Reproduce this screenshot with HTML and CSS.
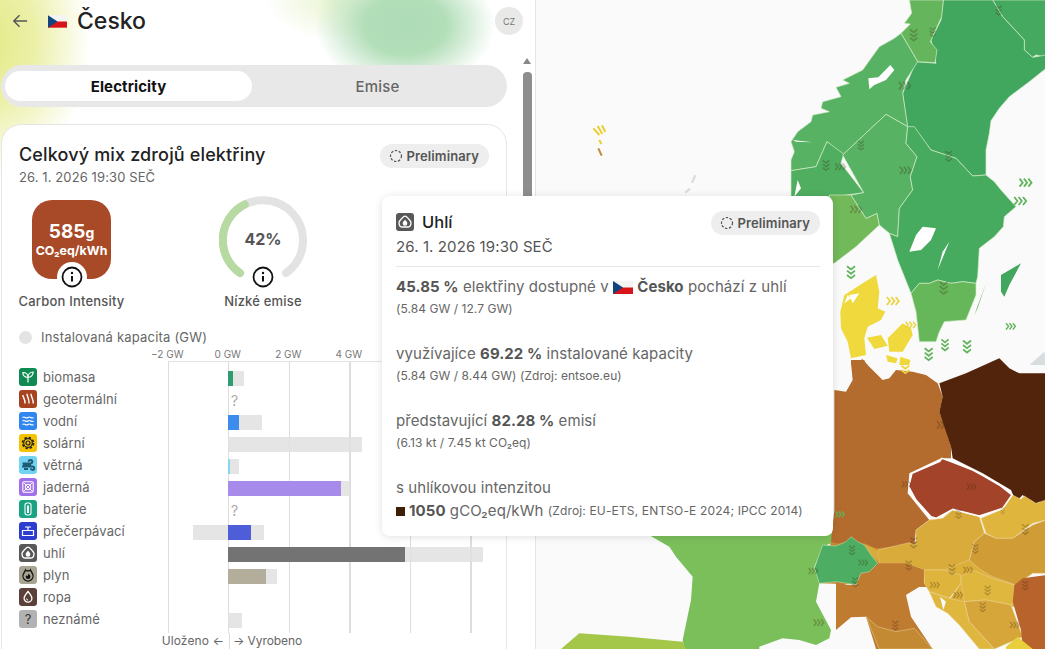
FILE: index.html
```html
<!DOCTYPE html>
<html lang="cs">
<head>
<meta charset="utf-8">
<title>Česko</title>
<link rel="stylesheet" href="styles.css">
</head>
<body>
<svg class="defs" aria-hidden="true">
  <symbol id="flag" viewBox="0 0 20 13"><rect width="20" height="6.500" fill="#f4f4f4"/><rect y="6.500" width="20" height="6.500" fill="#d7141a"/><path d="M0 0l10 6.500L0 13z" fill="#11457e"/></symbol>
  <symbol id="spin" viewBox="0 0 14 14"><circle cx="7" cy="7" r="5.500" fill="none" stroke="#555" stroke-width="1.200" stroke-dasharray="2.400 1.600"/></symbol>
  <symbol id="info" viewBox="0 0 22 22"><circle cx="11" cy="11" r="9.500" fill="#fff" stroke="#111" stroke-width="1.800"/><circle cx="11" cy="7" r="1.200" fill="#111"/><path d="M11 10v5.500" stroke="#111" stroke-width="2"/></symbol>
  <symbol id="i-bio" viewBox="0 0 18 18"><path d="M9 14.500V8.500M9 9.500C9 6.500 7 4.500 3.800 4.500 3.800 7.500 6 9.500 9 9.500zM9 9.500C9 6.500 11 4 14.200 4 14.200 7 12 9.500 9 9.500z" fill="none" stroke="#fff" stroke-width="1.200" stroke-linejoin="round"/></symbol>
  <symbol id="i-geo" viewBox="0 0 18 18"><path d="M3.800 5c.2 2.500 2.700 4.500 2.200 8.500M8 3.800c0 3 2.500 5 2 9.700M12 3.800c0 3 2.600 5.200 2.200 9.700" fill="none" stroke="#fff" stroke-width="1.400"/></symbol>
  <symbol id="i-hydro" viewBox="0 0 18 18"><path d="M3.500 5.500q1.400-1 2.800 0t2.700 0 2.800 0 2.700 0M3.500 9q1.400-1 2.800 0t2.700 0 2.800 0 2.700 0M3.500 12.500q1.400-1 2.800 0t2.700 0 2.800 0 2.700 0" fill="none" stroke="#fff" stroke-width="1.200"/></symbol>
  <symbol id="i-solar" viewBox="0 0 18 18"><circle cx="9" cy="9" r="2" fill="none" stroke="#222" stroke-width="1.200"/><circle cx="9" cy="9" r="4.300" fill="none" stroke="#222" stroke-width="1.200"/><circle cx="9" cy="9" r="5.500" fill="none" stroke="#222" stroke-width="1.600" stroke-dasharray="2.400 1.920"/></symbol>
  <symbol id="i-wind" viewBox="0 0 18 18"><path d="M3.500 7.500h8a1.800 1.800 0 1 0-1.800-1.800M3 10.500h10.500a1.700 1.700 0 1 1-1.700 1.700M4 9l8 0M5 13h4" fill="none" stroke="#1d5c74" stroke-width="2"/></symbol>
  <symbol id="i-nuke" viewBox="0 0 18 18"><rect x="3.800" y="3.800" width="10.400" height="10.400" rx="1.500" fill="none" stroke="#fff" stroke-width="1.100"/><path d="M4.500 4.500l9 9M13.500 4.500l-9 9" stroke="#fff" stroke-width="1"/><circle cx="9" cy="9" r="2.800" fill="none" stroke="#fff" stroke-width="1"/></symbol>
  <symbol id="i-batt" viewBox="0 0 18 18"><rect x="6" y="3" width="6" height="12" rx="2.200" fill="none" stroke="#fff" stroke-width="1.100"/><rect x="8" y="5.500" width="2" height="7.500" fill="#fff"/></symbol>
  <symbol id="i-pump" viewBox="0 0 18 18"><path d="M3.500 8.500h11v5h-11zM9 8.500V5M6 5h6" fill="none" stroke="#fff" stroke-width="1.200"/></symbol>
  <symbol id="i-coal" viewBox="0 0 18 18"><path d="M9 3.200c1.500 0 2.500 1.500 3.500 2.500s2.500 2.500 2.500 4c0 2.500-1.500 4.300-3.500 4.300h-5C4.500 14 3 12.200 3 9.700c0-1.500 1.500-3 2.500-4S7.500 3.200 9 3.200z" fill="none" stroke="#fff" stroke-width="1.300"/><path d="M9 6.800c1.500 1.600 2.300 2.600 2.300 3.600a2.300 2.300 0 0 1-4.600 0c0-1 .8-2 2.300-3.600z" fill="#fff"/></symbol>
  <symbol id="i-gas" viewBox="0 0 18 18"><path d="M6.500 4c.5 1 1.500 1.200 2.500.5 1 .7 2 .5 2.500-.5.300 1.200 1 1.600 1.500 3a5 5 0 1 1-8 0c.5-1.400 1.200-1.800 1.500-3z" fill="none" stroke="#111" stroke-width="1.300"/><path d="M9.500 7.500c1.400 1.400 2 2.200 2 3.200a2.400 2.400 0 0 1-4.800 0c0-.5.200-1 .6-1.400.5.600 1 .8 1.500.5.400-.6.500-1.400.7-2.300z" fill="#111"/></symbol>
  <symbol id="i-oil" viewBox="0 0 18 18"><path d="M9 3.500c2.600 3.100 3.900 4.900 3.900 6.700a3.900 3.900 0 0 1-7.800 0C5.100 8.400 6.400 6.600 9 3.500z" fill="none" stroke="#fff" stroke-width="1.300"/><path d="M7.500 10.500a1.500 1.500 0 0 0 1.500 1.500" fill="none" stroke="#fff" stroke-width="1"/></symbol>
  <symbol id="chev" viewBox="0 0 40 30"><path d="M3 5l8 10-8 10M14 5l8 10-8 10M25 5l8 10-8 10" fill="none" stroke="currentColor" stroke-width="4.500"/></symbol>
  <symbol id="chevd" viewBox="0 0 30 40"><path d="M5 3l10 8 10-8M5 14l10 8 10-8M5 25l10 8 10-8" fill="none" stroke="currentColor" stroke-width="4.500"/></symbol>
</svg>

<aside class="panel">
  <div class="content">
    <header class="head">
      <svg class="back" viewBox="0 0 18 18"><path d="M17 9H2M8.500 2.500L2 9l6.500 6.500" fill="none" stroke="#555" stroke-width="1.600"/></svg>
      <svg class="flag-big"><use href="#flag"/></svg>
      <h1 class="country">Česko</h1>
      <span class="code">CZ</span>
    </header>

    <div class="tabs">
      <div class="tab tab-on">Electricity</div>
      <div class="tab">Emise</div>
    </div>

    <section class="card">
      <div class="card-head">
        <div>
          <h2 class="card-title">Celkový mix zdrojů elektřiny</h2>
          <p class="card-date">26. 1. 2026 19:30 SEČ</p>
        </div>
        <span class="chip"><svg class="spin"><use href="#spin"/></svg>Preliminary</span>
      </div>

      <div class="stats">
        <div class="stat">
          <div class="visual">
            <div class="tile">
              <div class="tile-big">585<small>g</small></div>
              <div class="tile-unit">CO₂eq/kWh</div>
            </div>
            <span class="notch"><svg class="info"><use href="#info"/></svg></span>
          </div>
          <div class="stat-label">Carbon Intensity</div>
        </div>
        <div class="stat">
          <div class="visual">
            <svg class="gauge" viewBox="0 0 88 88">
              <path d="M21 77A40 40 0 1 1 67 77" fill="none" stroke="#e3e3e3" stroke-width="8" stroke-linecap="round"/>
              <path d="M21 77A40 40 0 0 1 25.700 8.400" fill="none" stroke="#b7d9a2" stroke-width="8" stroke-linecap="round"/>
            </svg>
            <span class="gauge-value">42%</span>
            <span class="notch notch-plain"><svg class="info"><use href="#info"/></svg></span>
          </div>
          <div class="stat-label">Nízké emise</div>
        </div>
      </div>

      <div class="legend"><i class="dot"></i>Instalovaná kapacita (GW)</div>
      <div class="axis"><span>−2 GW</span><span>0 GW</span><span>2 GW</span><span>4 GW</span></div>

      <div class="chart">
        <ul class="names">
          <li><span class="ic bg-bio"><svg><use href="#i-bio"/></svg></span>biomasa</li>
          <li><span class="ic bg-geo"><svg><use href="#i-geo"/></svg></span>geotermální</li>
          <li><span class="ic bg-hydro"><svg><use href="#i-hydro"/></svg></span>vodní</li>
          <li><span class="ic bg-solar"><svg><use href="#i-solar"/></svg></span>solární</li>
          <li><span class="ic bg-wind"><svg><use href="#i-wind"/></svg></span>větrná</li>
          <li><span class="ic bg-nuke"><svg><use href="#i-nuke"/></svg></span>jaderná</li>
          <li><span class="ic bg-batt"><svg><use href="#i-batt"/></svg></span>baterie</li>
          <li><span class="ic bg-pump"><svg><use href="#i-pump"/></svg></span>přečerpávací</li>
          <li><span class="ic bg-coal"><svg><use href="#i-coal"/></svg></span>uhlí</li>
          <li><span class="ic bg-gas"><svg><use href="#i-gas"/></svg></span>plyn</li>
          <li><span class="ic bg-oil"><svg><use href="#i-oil"/></svg></span>ropa</li>
          <li><span class="ic bg-unk">?</span>neznámé</li>
        </ul>
        <div class="plot">
          <div class="row"><div class="cap" style="margin-left:60px;width:16px"><div class="gen c-bio" style="width:5px"></div></div></div>
          <div class="row"><span class="q">?</span></div>
          <div class="row"><div class="cap" style="margin-left:60px;width:34px"><div class="gen c-hydro" style="width:11px"></div></div></div>
          <div class="row"><div class="cap" style="margin-left:60px;width:134px"></div></div>
          <div class="row"><div class="cap" style="margin-left:60px;width:11px"><div class="gen c-wind" style="width:2px"></div></div></div>
          <div class="row"><div class="cap" style="margin-left:60px;width:122px"><div class="gen c-nuke" style="width:113px"></div></div></div>
          <div class="row"><span class="q">?</span></div>
          <div class="row"><div class="cap" style="margin-left:25px;width:71px"><div class="gen c-pump" style="margin-left:35px;width:23px"></div></div></div>
          <div class="row"><div class="cap" style="margin-left:60px;width:255px"><div class="gen c-coal" style="width:177px"></div></div></div>
          <div class="row"><div class="cap" style="margin-left:60px;width:49px"><div class="gen c-gas" style="width:38px"></div></div></div>
          <div class="row"></div>
          <div class="row"><div class="cap" style="margin-left:60px;width:14px"></div></div>
        </div>
      </div>

      <div class="foot">
        <span class="foot-l">Uloženo ←</span>
        <span class="foot-r">→ Vyrobeno</span>
      </div>
    </section>
  </div>
  <div class="scroll"><i class="scroll-up"></i><i class="scroll-thumb"></i></div>
</aside>

<main class="map">
  <svg class="map-svg" viewBox="0 0 1530 1947" preserveAspectRatio="none">
    <g stroke="#d4ecc9" stroke-width="2" stroke-linejoin="round">
      <path fill="#46a960" d="M1370 0H1530V172L1500 165 1490 172 1465 150V120L1400 50z"/>
      <path fill="#42a75e" d="M1222 0H1370L1400 50 1465 120V150L1490 172 1530 165V205L1480 245 1460 260 1420 290 1390 325 1365 362 1360 400 1350 450V525L1310 528 1260 475 1185 450 1135 385H1115L1100 280 1140 185 1200 190 1185 120 1215 60z"/>
      <path fill="#65b55c" d="M1120 0H1222L1217 50 1183 125 1203 150 1197 188 1145 185 1095 100 1123 72 1105 70 1127 40z"/>
      <path fill="#57b263" d="M1095 100L1145 185 1110 240 1100 280 1115 380 1050 343 920 465 873 425 840 500 765 512V480L775 455 765 425 785 395 825 365 830 345 880 335 855 325 860 305 915 290 900 262 940 250 920 240 980 210 1005 175 1030 140 1075 115z"/>
      <path fill="#4fae5f" d="M765 512L840 500 873 425 923 462 915 490 983 578 895 590 800 590 765 600z"/>
      <path fill="#72b95a" d="M880 585H945L990 655 1023 640 1030 675 960 740 895 790H880z"/>
      <path fill="#57b263" d="M920 465L1050 343 1115 380 1110 430 1143 470 1123 530 1130 570 1090 625 1085 710 1060 700 1030 675 1023 640 990 655 945 585 983 578z"/>
      <path fill="#47ab5f" d="M1115 380H1135L1185 450 1260 475 1310 528 1350 525 1375 545 1395 570 1440 620 1405 650 1402 680 1375 710 1330 745 1325 830 1320 850 1280 845 1245 850 1205 840 1180 850 1150 850 1125 880 1085 780 1060 700 1085 710 1090 625 1130 570 1123 530 1143 470 1110 430z"/>
      <path fill="#65b75a" d="M1125 880L1150 850 1180 850 1205 840 1245 850 1280 845 1320 850 1320 885 1290 960 1225 965 1210 995 1200 1025 1150 1025 1140 935z"/>
    </g>
    <path fill="#fff" d="M1063 195L1075 210 1050 240 1015 255 1000 268 997 235 1027 232z"/>
    <path fill="#fff" d="M1160 680L1200 685 1185 720 1155 750 1120 755 1140 705zM1240 725L1205 810 1220 755z"/>
    <path fill="#fff" d="M770 420L830 427 780 425zM785 540L795 565 775 590z"/>
    <path fill="#42a75e" d="M1395 825L1455 790 1420 855 1405 890 1395 875z"/>
    <path fill="#65b75a" d="M1315 945L1350 850 1325 925z"/>
    <path d="M172 385l18 20M185 378l14 24M198 376l10 20M190 420l6 12" fill="none" stroke="#e9ce2c" stroke-width="6"/>
    <path d="M187 445l10 22" fill="none" stroke="#c08a3a" stroke-width="6"/>
    <path d="M448 578l14-12M468 548l10-22" fill="none" stroke="#dcdcdc" stroke-width="7"/>
    <g transform="translate(885,585)" fill="#efd93c">
      <path d="M135 240L145 290 140 340 163 350 150 375 110 395 100 430 105 480 60 490 50 440 30 400 28 350 40 300 95 265z"/>
      <path d="M108 428L150 420 170 452 130 462z"/>
      <path d="M170 430L215 385 240 400 245 420 215 470 175 470z"/>
      <path d="M165 480L200 490 195 505 170 500zM208 485L238 495 235 510 205 510z"/>
      <path d="M60 495L100 495 105 510 60 510z" fill="#b46c2e"/>
      <path fill="#fff" d="M55 300L85 295 65 325zM60 310L40 325 50 300z"/>
      <path fill="#d8dde0" d="M595 510L640 470 645 510z"/>
    </g>
    <path fill="#7bbf5b" d="M330 1600H895L885 1630 860 1640 835 1700 850 1750 840 1805 885 1890 880 1915 840 1935 790 1920 740 1915 670 1940V1947H445L440 1920 465 1800 470 1730 420 1670 400 1640z"/>
    <path fill="#a4c74a" d="M75 1947L130 1900 280 1910 440 1925 450 1947z"/>
    <path fill="#c38a33" d="M885 1625H1300V1710H1170L1160 1760 850 1750z"/>
    <path fill="#b46c2e" d="M945 1090L980 1078 1000 1100 1040 1140 1060 1135 1080 1110 1130 1115 1170 1125 1205 1150 1220 1190 1210 1235 1230 1290 1245 1340V1375L1215 1375 1120 1420 1115 1480 1180 1560 1140 1590 1135 1635 1020 1645 985 1630 900 1630 885 1625 895 1530V1170L930 1175 950 1140z"/>
    <path fill="#52240b" d="M1210 1150L1290 1120 1390 1075 1420 1105 1450 1120H1530V1515L1510 1505 1495 1515 1480 1500 1460 1485 1440 1505 1425 1470 1340 1420 1250 1375 1245 1340 1225 1280 1210 1235 1220 1190z"/>
    <g transform="translate(900,1410)" stroke="#ecd49a" stroke-width="1.500" stroke-linejoin="round">
      <path fill="#dcae3a" stroke="none" d="M265 295L400 265 470 315 540 340 535 410 385 400 340 390 375 340z"/>
      <path fill="#d9ab3a" d="M280 150L320 145 350 120 430 140 445 190 415 215 400 270 325 300H265L210 280H130L125 240 220 218 240 225 240 180z"/>
      <path fill="#d9ab3a" stroke="none" d="M85 222L125 240 130 280 105 255z"/>
      <path fill="#dfb53d" d="M435 145L500 118 530 75 555 88 565 78 600 100 630 90V150L590 160 530 205H480L450 190z"/>
      <path fill="#d09c36" d="M445 190L480 205H530L590 165 630 150V310L590 310 540 345 470 320 435 300 400 270 415 215z"/>
      <path fill="#bf7b30" stroke="none" d="M0 335L35 345H60L75 310 100 290 125 280H210L265 300V340L278 352 250 350 210 375 225 440 290 537H120L90 440 45 442 0 480z"/>
      <path fill="#c38a33" d="M90 440L125 470 180 485 235 475 290 537H130z"/>
      <path fill="#dfb43c" d="M265 300H325L375 315 375 340 340 385 280 365 265 340z"/>
      <path fill="#e0b73e" d="M375 320L410 300 470 325 535 345 530 405 450 390 385 395 375 340z"/>
      <path fill="#e0b73e" d="M280 365L340 385 385 395 400 455 475 537H430L370 465 335 430 300 410z"/>
      <path fill="#d6a63a" d="M385 395L450 390 525 405 560 500 475 537 400 455z"/>
      <path fill="#b9632c" stroke="none" d="M535 345L560 325 630 315V537H560L555 480 530 395z"/>
      <path fill="#e9cf3c" stroke="none" d="M510 530L545 500 590 537H510z"/>
      <path fill="#fafafa" stroke="none" d="M312 380L330 395 322 420zM280 375L300 410 285 395z"/>
      <path fill="#4dad62" stroke="#c8e8c0" stroke-width="1.500" d="M-40 225L0 228 30 215 45 200 65 215 85 225 105 255 125 280 100 305 75 310 60 345 35 340 0 335-50 340-65 295z"/>
      <path fill="#a2432a" stroke="#fff" stroke-width="4.500" d="M228 10L310 -25 318 -35 345 -25 410 0 438 15 490 45 528 75 500 115 430 138 350 118 300 145 285 140 240 90 218 50z"/>
    </g>
    <g class="ch-dark">
      <use href="#chev" x="1085" y="240" width="46" height="34"/>
      <use href="#chevd" x="1115" y="85" width="36" height="45"/>
      <use href="#chevd" x="1170" y="80" width="40" height="36"/>
      <use href="#chevd" x="1370" y="15" width="36" height="36"/>
      <use href="#chevd" x="955" y="420" width="40" height="36"/>
      <use href="#chevd" x="850" y="478" width="40" height="40"/>
      <use href="#chev" x="895" y="485" width="40" height="30"/>
      <use href="#chev" x="1085" y="495" width="50" height="32"/>
      <use href="#chevd" x="1220" y="450" width="36" height="40"/>
      <use href="#chevd" x="1205" y="840" width="36" height="52"/>
      <use href="#chev" x="940" y="610" width="44" height="36"/>
      <use href="#chev" x="1200" y="1255" width="44" height="40"/>
      <use href="#chev" x="1095" y="1440" width="36" height="26"/>
      <use href="#chev" x="1290" y="1445" width="36" height="30"/>
      <use href="#chevd" x="1250" y="1525" width="36" height="36"/>
      <use href="#chevd" x="1385" y="1520" width="30" height="26"/>
      <use href="#chevd" x="1115" y="1610" width="36" height="40"/>
      <use href="#chevd" x="1450" y="1570" width="36" height="40"/>
      <use href="#chevd" x="1300" y="1630" width="36" height="36"/>
      <use href="#chevd" x="1100" y="1680" width="36" height="36"/>
      <use href="#chevd" x="1230" y="1690" width="36" height="40"/>
      <use href="#chev" x="1280" y="1695" width="36" height="30"/>
      <use href="#chev" x="1180" y="1740" width="36" height="30"/>
      <use href="#chev" x="1250" y="1770" width="36" height="30"/>
      <use href="#chevd" x="1340" y="1755" width="30" height="36"/>
      <use href="#chevd" x="1325" y="1805" width="30" height="36"/>
      <use href="#chev" x="1420" y="1860" width="36" height="30"/>
      <use href="#chevd" x="1060" y="1860" width="36" height="36"/>
      <use href="#chev" x="830" y="1850" width="40" height="36"/>
      <use href="#chev" x="815" y="1695" width="36" height="36"/>
      <use href="#chevd" x="930" y="1635" width="36" height="36"/>
      <use href="#chev" x="965" y="1670" width="36" height="36"/>
      <use href="#chevd" x="940" y="1730" width="36" height="36"/>
      <use href="#chevd" x="1450" y="1740" width="36" height="36"/>
    </g>
    <g class="ch-green">
      <use href="#chev" x="1445" y="530" width="52" height="36"/>
      <use href="#chev" x="1430" y="585" width="50" height="36"/>
      <use href="#chevd" x="925" y="795" width="40" height="48"/>
      <use href="#chev" x="1400" y="965" width="52" height="28"/>
      <use href="#chevd" x="1160" y="1035" width="36" height="60"/>
      <use href="#chevd" x="1205" y="1015" width="44" height="44"/>
      <use href="#chevd" x="1275" y="1015" width="36" height="54"/>
      <use href="#chev" x="895" y="1525" width="36" height="36"/>
    </g>
    <g class="ch-yellow">
      <use href="#chev" x="1045" y="885" width="56" height="36"/>
      <use href="#chev" x="1100" y="960" width="52" height="30"/>
      <use href="#chevd" x="1090" y="1080" width="36" height="48"/>
    </g>
  </svg>
</main>

<div class="tip">
  <div class="tip-head">
    <div>
      <div class="tip-title"><span class="ic bg-coal"><svg><use href="#i-coal"/></svg></span>Uhlí</div>
      <p class="tip-date">26. 1. 2026 19:30 SEČ</p>
    </div>
    <span class="chip"><svg class="spin"><use href="#spin"/></svg>Preliminary</span>
  </div>
  <div class="tip-body">
    <div class="tip-block">
      <p class="tip-line"><b>45.85 %</b> elektřiny dostupné v <svg class="flag-small"><use href="#flag"/></svg> <b>Česko</b> pochází z uhlí</p>
      <p class="tip-sub">(5.84 GW / 12.7 GW)</p>
    </div>
    <div class="tip-block">
      <p class="tip-line">využívajíce <b>69.22 %</b> instalované kapacity</p>
      <p class="tip-sub">(5.84 GW / 8.44 GW) (Zdroj: entsoe.eu)</p>
    </div>
    <div class="tip-block">
      <p class="tip-line">představující <b>82.28 %</b> emisí</p>
      <p class="tip-sub">(6.13 kt / 7.45 kt CO₂eq)</p>
    </div>
    <div class="tip-block">
      <p class="tip-line">s uhlíkovou intenzitou</p>
      <p class="tip-last"><i class="swatch"></i><b>1050</b> gCO₂eq/kWh <span class="tip-source">(Zdroj: EU-ETS, ENTSO-E 2024; IPCC 2014)</span></p>
    </div>
  </div>
</div>
</body>
</html>
```
FILE: styles.css
```css
* { box-sizing: border-box; }
html, body { margin: 0; height: 100%; }
body {
  width: 1045px;
  height: 649px;
  overflow: hidden;
  display: flex;
  font-family: Inter, "Liberation Sans", sans-serif;
  color: #555;
  background: #fafafa;
  position: relative;
}
h1, h2, p, ul { margin: 0; padding: 0; list-style: none; }
.defs { width: 0; height: 0; position: absolute; }

.panel {
  flex: 0 0 536px;
  height: 649px;
  overflow: hidden;
  display: flex;
  padding-left: 1px;
  border-right: 1px solid #e6e6e6;
  background:
    radial-gradient(ellipse 90px 65px at 405px 25px, #aedcb6 0%, #b2deb8 45%, rgba(190,228,195,0) 100%),
    radial-gradient(ellipse 70px 40px at 335px 0, rgba(225,240,190,.7), rgba(255,255,255,0) 100%),
    radial-gradient(ellipse 100px 140px at -10px 40px, #e4ea88 0%, #ecf0a8 45%, rgba(255,255,255,0) 100%),
    #fff;
}
.content { width: 506px; flex: none; }

.head { height: 42px; display: flex; align-items: center; padding-left: 11px; }
.back { width: 16px; height: 16px; flex: none; }
.flag-big { width: 19px; height: 13px; margin-left: 20px; flex: none; }
.country { font-size: 23px; line-height: 30px; font-weight: 500; color: #222; margin-left: 10px; }
.code {
  margin-left: auto;
  margin-right: -16px;
  width: 28px; height: 28px;
  border-radius: 50%;
  background: #e9eae8;
  color: #777;
  font-size: 9px;
  display: flex; align-items: center; justify-content: center;
}

.tabs {
  margin-top: 23px;
  height: 42px;
  border-radius: 21px;
  background: #e8e8e8;
  padding: 6px 4px;
  display: flex;
}
.tab {
  flex: 1;
  border-radius: 15px;
  display: flex; align-items: center; justify-content: center;
  font-size: 15px; font-weight: 500; color: #666; letter-spacing: .2px;
}
.tab-on { flex: 0 0 247px; background: #fff; color: #111; font-weight: 700; letter-spacing: .1px; }

.card {
  margin-top: 17px;
  height: 560px;
  background: #fff;
  border: 1px solid #e6e6e6;
  border-radius: 20px;
  padding: 19px 0 0 17px;
}
.card-head { display: flex; justify-content: space-between; align-items: flex-start; padding-right: 17px; }
.card-title { font-size: 18px; line-height: 22px; font-weight: 500; color: #222; letter-spacing: .15px; }
.card-date { margin-top: 3px; font-size: 13px; line-height: 16px; color: #666; letter-spacing: .1px; }

.chip {
  display: inline-flex; align-items: center; gap: 4px;
  height: 24px;
  padding: 0 10px 0 9px;
  border-radius: 12px;
  background: #eee;
  font-size: 13px; font-weight: 600; color: #555;
  letter-spacing: .1px;
  flex: none;
}
.spin { width: 14px; height: 14px; }

.stats { display: flex; gap: 86.500px; margin-top: 11px; }
.stat { width: 105px; display: flex; flex-direction: column; align-items: center; }
.visual { position: relative; width: 88px; height: 88px; display: flex; align-items: center; justify-content: center; }
.tile {
  width: 79px; height: 79px;
  margin-top: -1px;
  border-radius: 20px;
  background: #a84a27;
  color: #fff;
  text-align: center;
  font-weight: 700;
  padding-top: 22px;
}
.tile-big { font-size: 19px; line-height: 20px; }
.tile-big small { font-size: 14px; }
.tile-unit { font-size: 12.400px; line-height: 15px; white-space: nowrap; }
.notch {
  position: absolute; left: 29px; top: 66px;
  width: 30px; height: 30px;
  border-radius: 50%;
  background: #fff;
  display: flex; align-items: center; justify-content: center;
}
.notch-plain { background: transparent; }
.info { width: 22px; height: 22px; }
.gauge { width: 88px; height: 88px; position: absolute; left: 0; top: 0; }
.gauge-value { font-size: 16px; font-weight: 700; color: #555; position: relative; top: -1px; }
.stat-label { margin-top: 9px; font-size: 13px; line-height: 16px; font-weight: 500; color: #555; white-space: nowrap; letter-spacing: .2px; }

.legend { margin-top: 20px; display: flex; align-items: center; font-size: 13px; line-height: 16px; color: #666; letter-spacing: .2px; }
.dot { width: 13px; height: 13px; border-radius: 50%; background: #e3e3e3; margin-right: 9px; }

.axis { margin: 3px 0 0 118px; display: flex; font-size: 10px; line-height: 12px; color: #777; }
.axis span { width: 60.500px; text-align: center; }

.chart { display: flex; height: 272px; margin-top: 1px; }
.names { width: 149px; flex: none; padding-top: 5px; }
.names li { height: 22px; display: flex; align-items: center; gap: 6px; font-size: 13px; color: #666; letter-spacing: .1px; }
.ic { width: 18px; height: 18px; border-radius: 3px; display: inline-flex; align-items: center; justify-content: center; flex: none; font-size: 13px; color: #333; }
.ic svg { width: 18px; height: 18px; display: block; }
.bg-bio { background: #0e8a52; }
.bg-geo { background: #a8431f; }
.bg-hydro { background: #2f86ee; }
.bg-solar { background: #f5c400; }
.bg-wind { background: #72d3f3; }
.bg-nuke { background: #a070ea; }
.bg-batt { background: #1aa383; }
.bg-pump { background: #2c3ccf; }
.bg-coal { background: #585858; }
.bg-gas { background: #aaa593; }
.bg-oil { background: #5a4038; }
.bg-unk { background: #b2b2b2; }

.plot {
  flex: 1;
  padding-top: 5px;
  border-top: 1px solid #e3e3e3;
  background: repeating-linear-gradient(to right, #ddd 0, #ddd 1px, transparent 1px, transparent 60.500px);
}
.row { height: 22px; display: flex; align-items: center; }
.cap { height: 15px; background: rgba(225,225,225,.85); display: flex; }
.gen { height: 15px; }
.q { margin-left: 63px; font-size: 14px; color: #aaa; }
.c-bio { background: #2e9c6f; }
.c-hydro { background: #3b8ced; }
.c-wind { background: #86d8ee; }
.c-nuke { background: #a78bea; }
.c-pump { background: #4e5ed8; }
.c-coal { background: #737373; }
.c-gas { background: #b3ad9b; }

.foot { display: flex; margin-left: 140px; font-size: 12px; line-height: 16px; color: #666; height: 20px; }
.foot-l { width: 70px; text-align: right; padding-right: 5px; white-space: nowrap; letter-spacing: .1px; }
.foot-r { border-left: 1px solid #ddd; padding-left: 3px; height: 20px; letter-spacing: -.1px; }

.scroll { margin: 58px 0 0 16px; width: 9px; flex: none; display: flex; flex-direction: column; }
.scroll-up { width: 0; height: 0; border: 4.500px solid transparent; border-top: 0; border-bottom: 6px solid #888; }
.scroll-thumb { margin-top: 8px; height: 330px; background: #8e8e8e; border-radius: 4px; }

.map { flex: 1; height: 649px; overflow: hidden; background: #fafafa; }
.map-svg { width: 510px; height: 649px; display: block; }
.ch-dark { color: rgba(60,40,10,.28); }
.ch-green { color: #62b45c; }
.ch-yellow { color: #ecd340; }

.tip {
  position: absolute;
  left: 382px; top: 196px;
  width: 451px; height: 340px;
  background: #fff;
  border-radius: 8px;
  box-shadow: 0 1px 8px rgba(0,0,0,.12);
  padding: 15px 13px 0 14px;
}
.tip-head { display: flex; justify-content: space-between; align-items: flex-start; height: 56px; border-bottom: 1px solid #e6e6e6; }
.tip-title { display: flex; align-items: center; gap: 8px; font-size: 16.500px; line-height: 22px; font-weight: 500; color: #222; }
.tip-date { margin-top: 5px; font-size: 15px; line-height: 18px; color: #555; letter-spacing: .1px; }
.tip-block { height: 67px; }
.tip-body { padding-top: 9px; }
.tip-line { font-size: 15px; line-height: 22px; color: #666; letter-spacing: .07px; white-space: nowrap; }
.tip-line b, .tip-last b { font-weight: 700; color: #555; }
.tip-sub { font-size: 12px; line-height: 22px; color: #666; white-space: nowrap; letter-spacing: .05px; }
.tip-last { font-size: 15px; line-height: 24px; color: #666; letter-spacing: .07px; display: flex; align-items: center; white-space: pre; }
.tip-source { font-size: 12px; letter-spacing: .15px; }
.swatch { width: 9px; height: 9px; background: #3e1f06; margin-right: 4px; }
.flag-small { width: 20px; height: 13px; vertical-align: -2px; }
```
